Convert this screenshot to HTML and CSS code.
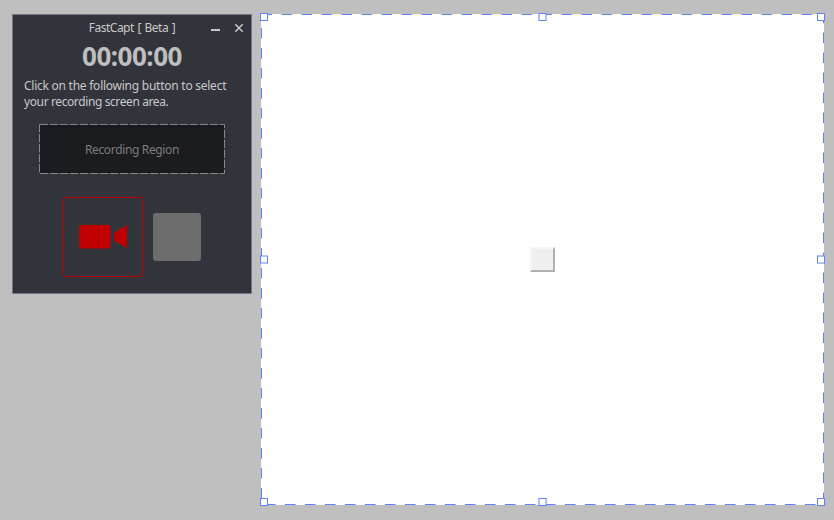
FILE: index.html
```html
<!DOCTYPE html>
<html lang="en">
<head>
<meta charset="utf-8">
<title>FastCapt</title>
<link rel="stylesheet" href="styles.css">
</head>
<body>
<main class="desktop">
  <section class="panel">
    <header class="titlebar">
      <span class="title">FastCapt [ Beta ]</span>
      <svg class="controls" width="33" height="12" viewBox="0 0 33 12">
        <path d="M0 8h9" stroke="#c8c8c8" stroke-width="2"/>
        <path d="M24.300 2.300l7.400 7.400M31.700 2.300l-7.400 7.400" stroke="#c8c8c8" stroke-width="1.500"/>
      </svg>
    </header>
    <div class="timer">00:00:00</div>
    <p class="hint">Click on the following button to select<br><span class="hint-end">your recording screen area.</span></p>
    <button class="region">
      <svg class="outline" width="186" height="50"><rect x=".5" y=".5" width="185" height="49" fill="#1a1b1e" stroke="#85878a" stroke-dasharray="8.500 1.500"/></svg>
      <span class="region-label">Recording Region</span>
    </button>
    <div class="actions">
      <button class="record">
        <svg width="48" height="24" viewBox="0 0 48 24" fill="#c00000"><rect width="31.500" height="23.500" rx="3"/><path d="M48 0v23L36.500 16.500Q35 15.500 35 14V9Q35 7.500 36.500 6.700z"/></svg>
      </button>
      <button class="stop"></button>
    </div>
  </section>
  <section class="capture">
    <svg class="marquee" width="565" height="493" viewBox="260 13 565 493">
      <rect x="261.500" y="14.500" width="562" height="490" fill="none" stroke="#5f80ff" stroke-dasharray="10.600 9.400"/>
      <g fill="#fff" stroke="#5f80ff">
        <rect x="260.500" y="13.500" width="7" height="7"/><rect x="539" y="13.500" width="7" height="7"/><rect x="817.500" y="13.500" width="7" height="7"/>
        <rect x="260.500" y="256" width="7" height="7"/><rect x="817.500" y="256" width="7" height="7"/>
        <rect x="260.500" y="498.500" width="7" height="7"/><rect x="539" y="498.500" width="7" height="7"/><rect x="817.500" y="498.500" width="7" height="7"/>
      </g>
    </svg>
    <button class="grip"></button>
  </section>
</main>
</body>
</html>
```
FILE: styles.css
```css
* { box-sizing: border-box; }
body { margin: 0; background: #bfbfbf; font: 12px/16px "Noto Sans", "Open Sans", sans-serif; }
button { font: inherit; padding: 0; border: 0; }
svg { display: block; }
.desktop { display: flex; align-items: flex-start; gap: 9px; padding: 14px 10px 15px 12px; height: 520px; }
.panel { width: 240px; height: 280px; background: #32343c; border: 1px solid #73758a; color: #c8c8c8; display: flex; flex-direction: column; }
.titlebar { position: relative; height: 26px; display: flex; justify-content: center; align-items: center; }
.title { font-size: 12px; letter-spacing: -.5px; word-spacing: 1px; }
.controls { position: absolute; right: 7px; top: 7px; }
.timer { height: 34px; line-height: 31px; text-align: center; font-size: 26px; font-weight: 700; letter-spacing: -.5px; color: #bfbfbf; }
.hint { margin: 3px 0 0 11px; white-space: nowrap; letter-spacing: -.25px; }
.hint-end { letter-spacing: -.39px; }
.region { position: relative; width: 186px; height: 50px; margin: 14px 0 0 26px; padding-top: 2px; background: none; color: #7c7d80; letter-spacing: -.35px; }
.region-label { position: relative; }
.outline { position: absolute; inset: 0; }
.actions { display: flex; align-items: center; gap: 10px; margin: 23px 0 0 50px; }
.record { width: 80px; height: 80px; border: 1px solid #c00000; border-radius: 3px; background: none; display: flex; align-items: center; justify-content: center; }
.stop { width: 48px; height: 48px; background: #6c6c6c; border-radius: 3px; }
.capture { position: relative; width: 563px; height: 491px; background: #fff; display: flex; align-items: center; justify-content: center; }
.marquee { position: absolute; left: -1px; top: -1px; }
.grip { width: 25px; height: 25px; background: #f0f0f0; border: 2px solid; border-color: #f6f6f6 #b0b0b0 #b0b0b0 #f6f6f6; }
```
